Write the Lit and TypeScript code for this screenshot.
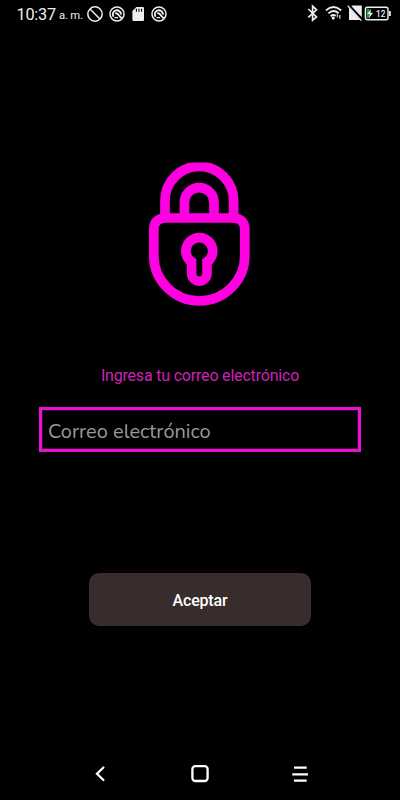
import { LitElement, html, css, svg } from "lit";
import { customElement } from "lit/decorators.js";

const dialRing = svg`
  <circle cx="8" cy="8" r="7" fill="none" stroke="#eee" stroke-width="1.5"/>
  <path d="M4.6 10.8A4.1 4.1 0 1 1 12 8.6" fill="none" stroke="#eee" stroke-width="1.9"/>
  <path d="M6.2 7.4Q8.4 7 9.4 8.8L12.6 12.4" fill="none" stroke="#eee" stroke-width="1.9"/>
  <path d="M5.4 11.6H9" stroke="#eee" stroke-width="1.3"/>`;

@customElement("status-bar")
class StatusBar extends LitElement {
  static styles = css`
    :host { display: flex; height: 28px; padding: 0 9px 0 16.5px; box-sizing: border-box; align-items: center; color: #eee; }
    .time { font-size: 16.3px; line-height: 28px; padding-top: 1px; width: 42.5px; letter-spacing: -0.25px; }
    .ampm { font-size: 11.3px; width: 27px; line-height: 28px; padding-top: 3px; box-sizing: border-box; white-space: nowrap; letter-spacing: -0.2px; }
    .left { display: flex; align-items: center; gap: 5px; padding-bottom: 1px; }
    .right { display: flex; align-items: center; margin-left: auto; padding-bottom: 2px; }
    svg { display: block; flex: none; }
    text { font: 500 8.2px Roboto, sans-serif; fill: #eee; }
  `;
  render() {
    return html`
      <span class="time">10:37</span><span class="ampm">a. m.</span>
      <div class="left">
        <svg width="18" height="16" viewBox="0 0 18 16"><circle cx="9" cy="8" r="7.2" fill="none" stroke="#eee" stroke-width="1.5"/><path d="M4 3L14 13" stroke="#eee" stroke-width="1.5"/></svg>
        <svg width="16" height="16" viewBox="0 0 16 16">${dialRing}</svg>
        <svg width="16" height="16" viewBox="0 0 16 16"><path d="M6.4 1H12.8Q14 1 14 2.2V13.8Q14 15 12.8 15H3.6Q2.4 15 2.4 13.8V5Z" fill="#eee"/><path d="M6.4 2.8V5.8M9 2.8V5.8M11.6 2.8V5.8" stroke="#000" stroke-width="1.1"/></svg>
        <svg width="16" height="16" viewBox="0 0 16 16">${dialRing}</svg>
      </div>
      <div class="right">
        <svg width="84" height="18" viewBox="307 4 84 18">
          <path d="M308.3 9L316.5 17L312.6 20.2V6.2L316.5 9.8L308.3 17.4" fill="none" stroke="#eee" stroke-width="1.7"/>
          <path d="M325.9 10.4Q333.4 3.8 341.2 10.4M328.4 13.4Q333.4 8.9 338.6 13.2M330.7 16.2Q333.3 14 335.6 16" fill="none" stroke="#eee" stroke-width="1.9"/>
          <circle cx="333.2" cy="18" r="1.6" fill="#eee"/>
          <path d="M337.4 13.8V17.5M339.8 15V18.8" stroke="#bbb" stroke-width="1.4"/>
          <path d="M351.8 5.4H361.8V17.6L351.3 6.2ZM349 7.6L360.2 20H349Z" fill="#eee"/>
          <path d="M347.8 5.8L361.4 20.6" stroke="#eee" stroke-width="1.3"/>
          <path d="M349.2 5L362.6 19.3" stroke="#000" stroke-width="1.3"/>
          <rect x="365.4" y="7.3" width="22.6" height="12.4" rx="2" fill="#000" stroke="#eee" stroke-width="1.4"/>
          <rect x="389" y="11" width="1.8" height="5" fill="#eee"/>
          <rect x="366.6" y="8.8" width="3" height="9.4" fill="#16a03c"/>
          <path d="M371 9L367.2 14H369.7L368.9 18.2L373 12.8H370.4Z" fill="#eee"/>
          <text x="376" y="16.6">12</text>
        </svg>
      </div>`;
  }
}

@customElement("lock-emblem")
class LockEmblem extends LitElement {
  static styles = css`
    :host { display: block; width: 104px; height: 146px; }
    svg { display: block; }
    .line { fill: none; stroke: #ff00e1; stroke-width: 9.7; }
  `;
  render() {
    return html`<svg width="104" height="146" viewBox="148 162 104 146">
      <path class="line" d="M165 218V200.7A34.3 34.3 0 0 1 233.6 200.7V218"/>
      <rect x="180" y="161" width="38" height="1.5" fill="#000"/>
      <path class="line" d="M184.4 218V202.4A14.8 14.8 0 0 1 214 202.4V218"/>
      <path class="line" d="M165.8 218H232.8Q244.8 218 244.8 230V255.5A45.5 45.5 0 0 1 153.8 255.5V230Q153.8 218 165.8 218Z"/>
      <path fill="#ff00e1" d="M186.8 264.5A18.3 18.3 0 1 1 211.8 264.5V273.5A12.5 12.5 0 0 1 186.8 273.5Z"/>
      <path fill="#000" d="M196.4 259A8.5 8.5 0 1 1 202.2 259V273.5A2.9 2.9 0 0 1 196.4 273.5Z"/>
    </svg>`;
  }
}

@customElement("nav-bar")
class NavBar extends LitElement {
  static styles = css`
    :host { display: flex; justify-content: center; align-items: center; gap: 82px; height: 53px; }
    svg { display: block; fill: none; stroke: #fff; stroke-width: 2.3; }
  `;
  render() {
    return html`
      <svg width="18" height="20" viewBox="0 0 18 20"><path d="M12.4 3.5L6 9.7L12.4 16" stroke-linecap="round"/></svg>
      <svg width="18" height="20" viewBox="0 0 18 20"><rect x="1.4" y="2.2" width="15.2" height="14.8" rx="3"/></svg>
      <svg width="18" height="20" viewBox="0 0 18 20"><path d="M3 3.6H15.7M1.3 10.3H17M3 16.6H15.7"/></svg>`;
  }
}

@customElement("app-root")
class AppRoot extends LitElement {
  static styles = css`
    :host { display: flex; flex-direction: column; align-items: center; width: 400px; height: 800px; background: #000; font-family: Roboto, sans-serif; overflow: hidden; }
    status-bar { width: 400px; }
    lock-emblem { margin-top: 134px; }
    .prompt { margin-top: 58px; height: 20px; font-size: 16px; line-height: 20px; letter-spacing: -0.19px; color: #cc22b8; white-space: nowrap; }
    .field { margin-top: 21px; width: 322px; height: 45px; box-sizing: border-box; border: 3px solid #ea12cf; box-shadow: inset 0 0 0 1px #75096880; border-radius: 0; background: #000; padding: 3px 6px 0; outline: none; font: 20px Nunito, "Noto Sans", sans-serif; color: #aaa; }
    .field::placeholder { color: #999; opacity: 1; }
    .accept { margin-top: 121px; width: 222px; height: 53px; border: 0; border-radius: 10px; background: #392c2c; color: #fff; font: 500 16px Roboto, sans-serif; letter-spacing: -0.18px; padding: 2px 0 0; }
    nav-bar { width: 400px; margin-top: auto; }
  `;
  render() {
    return html`
      <status-bar></status-bar>
      <lock-emblem></lock-emblem>
      <div class="prompt">Ingresa tu correo electrónico</div>
      <input class="field" type="email" placeholder="Correo electrónico">
      <button class="accept">Aceptar</button>
      <nav-bar></nav-bar>`;
  }
}
